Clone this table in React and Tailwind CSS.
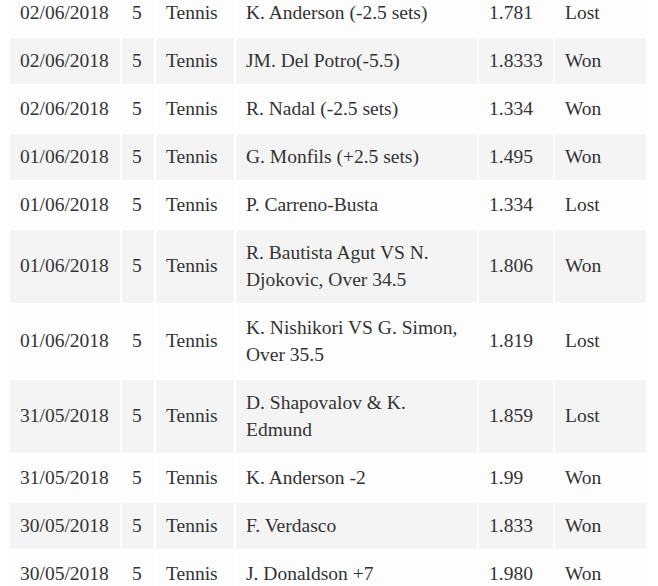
const rows = [
  ['02/06/2018', '5', 'Tennis', 'K. Anderson (-2.5 sets)', '1.781', 'Lost'],
  ['02/06/2018', '5', 'Tennis', 'JM. Del Potro(-5.5)', '1.8333', 'Won'],
  ['02/06/2018', '5', 'Tennis', 'R. Nadal (-2.5 sets)', '1.334', 'Won'],
  ['01/06/2018', '5', 'Tennis', 'G. Monfils (+2.5 sets)', '1.495', 'Won'],
  ['01/06/2018', '5', 'Tennis', 'P. Carreno-Busta', '1.334', 'Lost'],
  ['01/06/2018', '5', 'Tennis', 'R. Bautista Agut VS N. Djokovic, Over 34.5', '1.806', 'Won'],
  ['01/06/2018', '5', 'Tennis', 'K. Nishikori VS G. Simon, Over 35.5', '1.819', 'Lost'],
  ['31/05/2018', '5', 'Tennis', 'D. Shapovalov & K. Edmund', '1.859', 'Lost'],
  ['31/05/2018', '5', 'Tennis', 'K. Anderson -2', '1.99', 'Won'],
  ['30/05/2018', '5', 'Tennis', 'F. Verdasco', '1.833', 'Won'],
  ['30/05/2018', '5', 'Tennis', 'J. Donaldson +7', '1.980', 'Won'],
];

export default function App() {
  return (
    <div className="h-[586px] overflow-hidden bg-white px-2">
      <table
        className="-mt-[12px] w-[640px] table-fixed border-separate border-spacing-[2px] text-[19.5px] leading-[27px] text-[#333]"
        style={{ fontFamily: '"Liberation Serif", serif' }}
      >
        <colgroup>
          <col className="w-[110px]" />
          <col className="w-[32px]" />
          <col className="w-[78px]" />
          <col className="w-[241px]" />
          <col className="w-[74px]" />
          <col className="w-[91px]" />
        </colgroup>
        <tbody>
          {rows.map((r, i) => (
            <tr key={i}>
              {r.map((c, j) => (
                <td
                  key={j}
                  className={`px-[10px] pt-[8.5px] pb-[10.5px] align-middle ${i % 2 ? 'bg-[#f4f4f4]' : 'bg-[#fdfdfd]'}`}
                >
                  {c}
                </td>
              ))}
            </tr>
          ))}
        </tbody>
      </table>
    </div>
  );
}
